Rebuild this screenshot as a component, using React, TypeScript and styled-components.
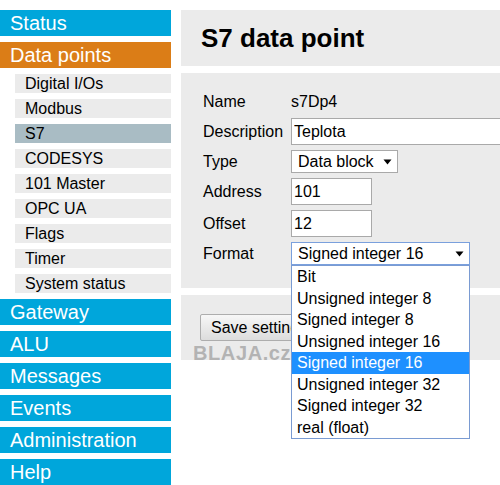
import styled, { createGlobalStyle } from "styled-components";

const GlobalStyle = createGlobalStyle`
  html, body {
    margin: 0;
    padding: 0;
    background: #fff;
    overflow: hidden;
  }
  body {
    font-family: "Liberation Sans", Arial, sans-serif;
    color: #000;
  }
`;

const subItems = [
  "Digital I/Os",
  "Modbus",
  "S7",
  "CODESYS",
  "101 Master",
  "OPC UA",
  "Flags",
  "Timer",
  "System status"
];

const formatOptions = [
  "Bit",
  "Unsigned integer 8",
  "Signed integer 8",
  "Unsigned integer 16",
  "Signed integer 16",
  "Unsigned integer 32",
  "Signed integer 32",
  "real (float)"
];

const Arrow = () => (
  <svg width="9" height="6" viewBox="0 0 9 6">
    <path d="M0.5 0.5 L8.5 0.5 L4.5 5.5 Z" fill="#000" />
  </svg>
);

export default function App() {
  return (
    <>
      <GlobalStyle />
      <Page>
        <Nav>
          <MainItem>Status</MainItem>
          <MainItem active>Data points</MainItem>
          {subItems.map((item) => (
            <SubItem key={item} active={item === "S7"}>
              {item}
            </SubItem>
          ))}
          <MainItem>Gateway</MainItem>
          <MainItem>ALU</MainItem>
          <MainItem>Messages</MainItem>
          <MainItem>Events</MainItem>
          <MainItem>Administration</MainItem>
          <MainItem>Help</MainItem>
        </Nav>
        <Content>
          <TitlePanel>
            <Title>S7 data point</Title>
          </TitlePanel>
          <FormPanel>
            <Label>Name</Label>
            <Value>s7Dp4</Value>
            <Label>Description</Label>
            <TextInput width={240} defaultValue="Teplota" />
            <Label>Type</Label>
            <Select width={107}>
              <span>Data block</span>
              <Arrow />
            </Select>
            <Label>Address</Label>
            <TextInput width={81} defaultValue="101" />
            <Label>Offset</Label>
            <TextInput width={81} defaultValue="12" />
            <Label>Format</Label>
            <SelectWrap>
              <Select width={179} focused>
                <span>Signed integer 16</span>
                <Arrow />
              </Select>
              <OptionList>
                {formatOptions.map((opt) => (
                  <Option key={opt} selected={opt === "Signed integer 16"}>
                    {opt}
                  </Option>
                ))}
              </OptionList>
            </SelectWrap>
          </FormPanel>
          <SavePanel>
            <SaveButton>Save settings</SaveButton>
            <Watermark>BLAJA.cz</Watermark>
          </SavePanel>
        </Content>
      </Page>
    </>
  );
}

const Page = styled.div`
  display: flex;
  gap: 10px;
  padding-top: 10px;
  width: 620px;
`;

const Nav = styled.div`
  width: 171px;
  flex-shrink: 0;
  display: flex;
  flex-direction: column;
  gap: 6px;
`;

const MainItem = styled.div<{ active?: boolean }>`
  height: 26px;
  line-height: 26px;
  padding-left: 10px;
  font-size: 20px;
  color: #fff;
  background: ${(props) => (props.active ? "#db7d17" : "#00a6db")};
`;

const SubItem = styled.div<{ active?: boolean }>`
  margin-left: 15px;
  height: 19px;
  line-height: 19px;
  padding-left: 10px;
  font-size: 16px;
  color: #000;
  background: ${(props) => (props.active ? "#a9bcc4" : "#ebebeb")};
`;

const Content = styled.div`
  flex: 1;
  display: flex;
  flex-direction: column;
  gap: 7px;
`;

const TitlePanel = styled.div`
  height: 56px;
  display: flex;
  align-items: center;
  padding-left: 20px;
  background: #ebebeb;
`;

const Title = styled.h1`
  margin: 0;
  font-size: 26px;
  font-weight: bold;
`;

const FormPanel = styled.div`
  display: grid;
  grid-template-columns: 88px 1fr;
  row-gap: 5px;
  align-items: center;
  justify-items: start;
  padding: 18px 0 23px 22px;
  background: #ebebeb;
`;

const Label = styled.div`
  font-size: 16px;
  line-height: 22px;
`;

const Value = styled.div`
  font-size: 16px;
  line-height: 22px;
`;

const TextInput = styled.input<{ width: number }>`
  box-sizing: border-box;
  width: ${(props) => props.width}px;
  height: 27px;
  padding: 0 2px;
  border: 1px solid #a9a9a9;
  background: #fff;
  font-family: "Liberation Sans", Arial, sans-serif;
  font-size: 16px;
  color: #000;
  outline: none;
`;

const SelectWrap = styled.div`
  position: relative;
`;

const Select = styled.div<{ width: number; focused?: boolean }>`
  box-sizing: border-box;
  width: ${(props) => props.width}px;
  height: 23px;
  display: flex;
  align-items: center;
  justify-content: space-between;
  padding: 0 5px 0 6px;
  border: 1px solid ${(props) => (props.focused ? "#7aa0dd" : "#a9a9a9")};
  background: #fff;
  font-size: 16px;
`;

const OptionList = styled.div`
  position: absolute;
  top: 100%;
  left: 0;
  z-index: 2;
  box-sizing: border-box;
  width: 179px;
  background: #fff;
  border: 1px solid #7a9bd2;
`;

const Option = styled.div<{ selected?: boolean }>`
  height: 21.5px;
  line-height: 21.5px;
  padding-left: 5px;
  font-size: 16px;
  white-space: nowrap;
  color: ${(props) => (props.selected ? "#fff" : "#000")};
  background: ${(props) => (props.selected ? "#1e90ff" : "transparent")};
`;

const SavePanel = styled.div`
  position: relative;
  height: 65px;
  padding: 19px 0 0 19px;
  box-sizing: border-box;
  background: #ebebeb;
`;

const SaveButton = styled.button`
  height: 27px;
  padding: 0 10px;
  border: 1px solid #adadad;
  border-radius: 2px;
  background: linear-gradient(180deg, #f7f7f7 0%, #dcdcdc 100%);
  font-family: "Liberation Sans", Arial, sans-serif;
  font-size: 16px;
  color: #000;
`;

const Watermark = styled.div`
  position: absolute;
  left: 12px;
  top: 48px;
  font-size: 20px;
  line-height: 20px;
  font-weight: bold;
  letter-spacing: 0.6px;
  color: #b3b3b3;
`;
